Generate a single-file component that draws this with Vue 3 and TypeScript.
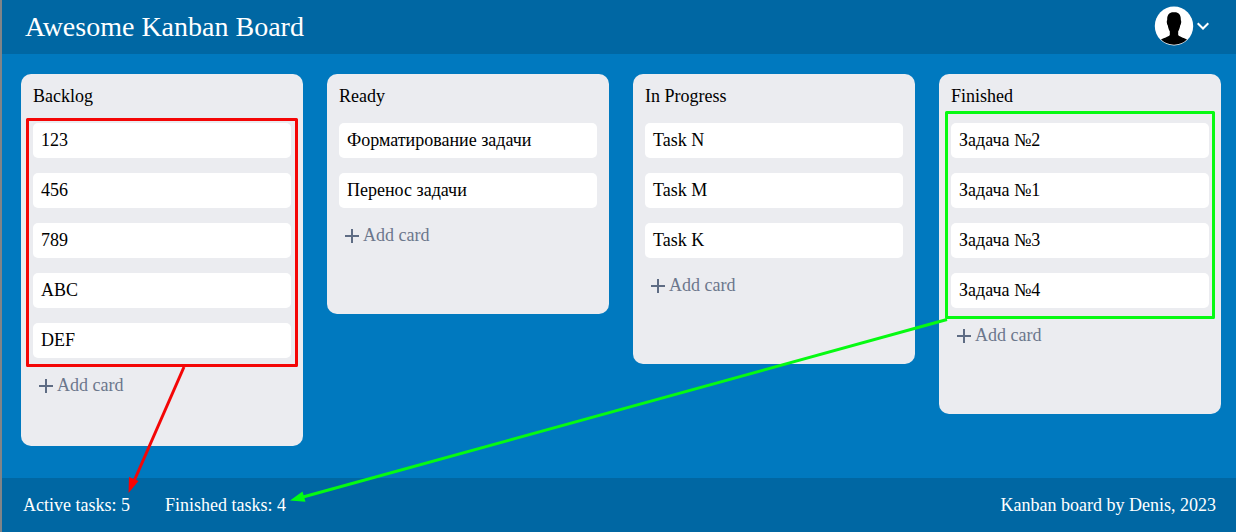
<script setup lang="ts">
import { computed } from 'vue'

interface Column {
  title: string
  tasks: string[]
}

const columns: Column[] = [
  { title: 'Backlog', tasks: ['123', '456', '789', 'ABC', 'DEF'] },
  { title: 'Ready', tasks: ['Форматирование задачи', 'Перенос задачи'] },
  { title: 'In Progress', tasks: ['Task N', 'Task M', 'Task K'] },
  { title: 'Finished', tasks: ['Задача №2', 'Задача №1', 'Задача №3', 'Задача №4'] },
]

const activeCount = computed(() => columns[0].tasks.length)
const finishedCount = computed(() => columns[3].tasks.length)
</script>

<template>
  <div class="page">
    <header class="header">
      <h1 class="brand">Awesome Kanban Board</h1>
      <button class="user" aria-label="User menu">
        <svg class="avatar" viewBox="0 0 40 40">
          <defs>
            <clipPath id="avatar-clip"><circle cx="20" cy="20" r="18.8" /></clipPath>
          </defs>
          <ellipse cx="20" cy="20" rx="19.200" ry="19.600" fill="#fff" />
          <path
            clip-path="url(#avatar-clip)"
            d="M20 6.200C15.500 5.900 12.900 8.500 13.200 14C12.400 15 12.800 18.500 13.800 19.500C14.200 22 14.900 24 15.800 25.200V29C14.500 31 9.500 31.700 6.500 34L4 40H36L33.500 34C30.500 31.700 25.500 31 24.200 29V25.200C25.100 24 25.800 22 26.200 19.500C27.200 18.500 27.600 15 26.800 14C27.100 8.500 24.500 5.900 20 6.200Z"
          />
        </svg>
        <svg class="chevron" viewBox="0 0 12 8">
          <path d="M0.700 1.200L6 6.500L11.300 1.200" fill="none" stroke="#fff" stroke-width="2" />
        </svg>
      </button>
    </header>

    <main class="board">
      <section v-for="column in columns" :key="column.title" class="column">
        <h2 class="title">{{ column.title }}</h2>
        <ul class="tasks">
          <li v-for="task in column.tasks" :key="task" class="task">{{ task }}</li>
        </ul>
        <button class="add">
          <svg class="plus" viewBox="0 0 14 14">
            <path d="M7 0V14M0 7H14" stroke="#5e6c84" stroke-width="2" />
          </svg>
          <span>Add card</span>
        </button>
      </section>
    </main>

    <footer class="footer">
      <div class="counts">
        <span>Active tasks: {{ activeCount }}</span>
        <span>Finished tasks: {{ finishedCount }}</span>
      </div>
      <span>Kanban board by Denis, 2023</span>
    </footer>

    <svg class="notes" viewBox="0 0 1236 532">
      <g stroke="#f40606" fill="none" stroke-width="3" stroke-linejoin="round">
        <rect x="27.500" y="119.500" width="269" height="246" />
        <path d="M184 367L134.500 480" />
      </g>
      <path d="M128.500 493L129 477L138.500 481Z" fill="#fc0202" />
      <g stroke="#06fa12" fill="none" stroke-width="3" stroke-linejoin="round">
        <rect x="946.500" y="112.500" width="267" height="205" />
        <path d="M947 319.500L303 497" />
      </g>
      <path d="M290 500.500L302.500 491.500L305.500 501.800Z" fill="#00ff12" />
    </svg>
  </div>
</template>

<style>
body {
  margin: 0;
}
</style>

<style scoped>
.page {
  position: relative;
  box-sizing: border-box;
  display: flex;
  flex-direction: column;
  width: 1236px;
  height: 532px;
  overflow: hidden;
  border-left: 2px solid #808488;
  background: #0079bf;
  font-family: 'Liberation Serif', 'Times New Roman', serif;
  font-size: 18px;
  line-height: 21px;
  color: #000;
}

.header,
.footer {
  display: flex;
  flex: none;
  align-items: center;
  justify-content: space-between;
  height: 54px;
  box-sizing: border-box;
  background: #0067a3;
  color: #fff;
}

.header {
  padding: 0 27px 0 23px;
}

.brand {
  margin: 0;
  font-size: 28px;
  font-weight: 400;
  line-height: 32px;
}

.user,
.add {
  display: flex;
  align-items: center;
  padding: 0;
  border: 0;
  background: none;
  font: inherit;
}

.user {
  gap: 3px;
  margin-bottom: 2px;
}

.avatar {
  width: 40px;
  height: 40px;
}

.chevron {
  width: 12px;
  height: 8px;
}

.board {
  display: flex;
  flex: 1;
  min-height: 0;
  align-items: flex-start;
  gap: 24px;
  padding: 20px 15px 32px 19px;
}

.column {
  flex: 1;
  box-sizing: border-box;
  max-height: 100%;
  padding: 12px 12px 68px;
  border-radius: 10px;
  background: #ebecf0;
}

.title {
  margin: 0 0 16px;
  font-size: 18px;
  font-weight: 400;
}

.tasks {
  display: flex;
  flex-direction: column;
  gap: 15px;
  margin: 0;
  padding: 0;
  list-style: none;
}

.task {
  padding: 7px 8px;
  border-radius: 5px;
  background: #fff;
}

.add {
  gap: 4px;
  margin-top: 17px;
  padding-left: 6px;
  color: #6b778c;
}

.plus {
  width: 14px;
  height: 14px;
}

.footer {
  padding: 0 20px 0 21px;
}

.counts {
  display: flex;
  gap: 35px;
}

.notes {
  position: absolute;
  top: 0;
  left: -2px;
  width: 1236px;
  height: 532px;
  pointer-events: none;
}
</style>
